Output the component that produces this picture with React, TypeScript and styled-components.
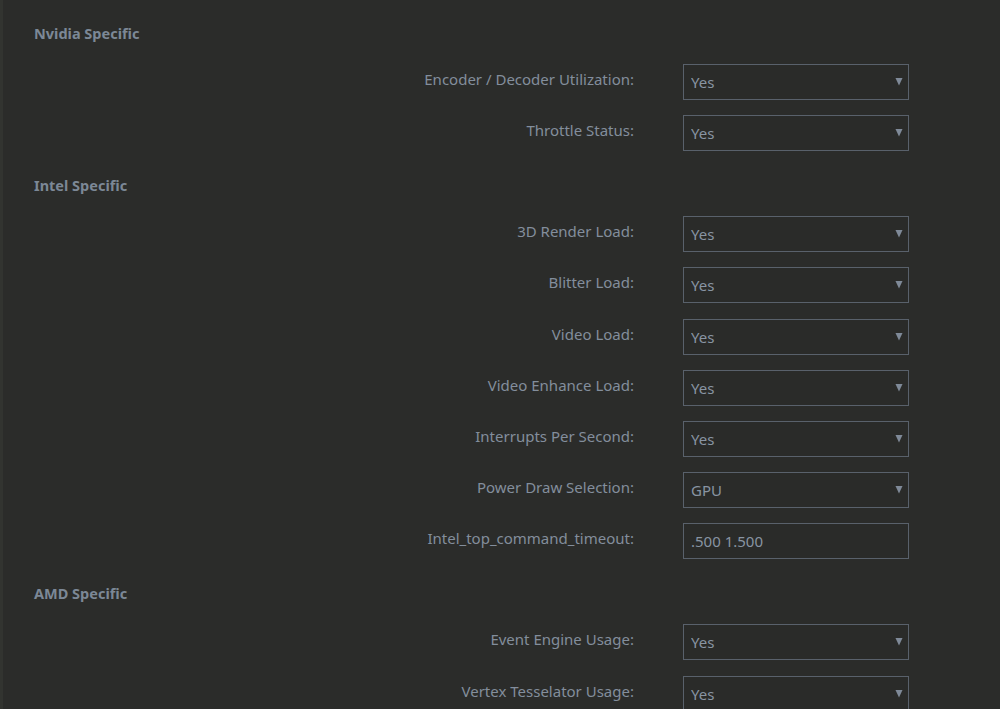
import React from "react";
import styled, { createGlobalStyle } from "styled-components";

type Field = {
  label: string;
  value: string;
  kind?: "select" | "text";
};

type Section = {
  title: string;
  fields: Field[];
};

const sections: Section[] = [
  {
    title: "Nvidia Specific",
    fields: [
      { label: "Encoder / Decoder Utilization:", value: "Yes" },
      { label: "Throttle Status:", value: "Yes" },
    ],
  },
  {
    title: "Intel Specific",
    fields: [
      { label: "3D Render Load:", value: "Yes" },
      { label: "Blitter Load:", value: "Yes" },
      { label: "Video Load:", value: "Yes" },
      { label: "Video Enhance Load:", value: "Yes" },
      { label: "Interrupts Per Second:", value: "Yes" },
      { label: "Power Draw Selection:", value: "GPU" },
      { label: "Intel_top_command_timeout:", value: ".500 1.500", kind: "text" },
    ],
  },
  {
    title: "AMD Specific",
    fields: [
      { label: "Event Engine Usage:", value: "Yes" },
      { label: "Vertex Tesselator Usage:", value: "Yes" },
    ],
  },
];

const GlobalStyle = createGlobalStyle`
  html, body {
    margin: 0;
    padding: 0;
    background: #2b2c2a;
    overflow: hidden;
  }
  * { box-sizing: border-box; }
`;

const Page = styled.div`
  width: 1000px;
  height: 709px;
  background: #2b2c2a;
  border-left: 3px solid #323430;
  padding: 23px 0 0 31px;
  font-family: "Noto Sans", "Open Sans", sans-serif;
  overflow: hidden;
`;

const Group = styled.section`
  display: flex;
  flex-direction: column;
  margin-bottom: 24px;
`;

const Heading = styled.h3`
  margin: 0 0 21px;
  font-size: 14.5px;
  line-height: 20px;
  font-weight: 700;
  color: #7c8896;
`;

const Rows = styled.div`
  display: flex;
  flex-direction: column;
  gap: 15.2px;
`;

const Row = styled.div`
  display: flex;
  align-items: flex-start;
  gap: 49px;
`;

const Label = styled.label`
  width: 600px;
  padding-top: 5px;
  text-align: right;
  font-size: 15px;
  line-height: 20px;
  color: #838e9c;
`;

const Control = styled.div`
  position: relative;
  width: 226px;
  height: 36px;
`;

const boxStyles = `
  width: 100%;
  height: 100%;
  margin: 0;
  padding: 0 24px 0 7px;
  border: 1px solid #59616b;
  border-radius: 0;
  background: #2a2b29;
  color: #8894a2;
  font-family: "Noto Sans", "Open Sans", sans-serif;
  font-size: 15px;
  outline: none;
`;

const Select = styled.select`
  ${boxStyles}
  appearance: none;
  -webkit-appearance: none;
`;

const TextInput = styled.input`
  ${boxStyles}
`;

const Caret = styled.svg`
  position: absolute;
  right: 6px;
  top: 13px;
  pointer-events: none;
`;

function FieldRow({ field }: { field: Field }) {
  return (
    <Row>
      <Label>{field.label}</Label>
      <Control>
        {field.kind === "text" ? (
          <TextInput readOnly value={field.value} />
        ) : (
          <>
            <Select defaultValue={field.value}>
              <option>{field.value}</option>
            </Select>
            <Caret width="8" height="9" viewBox="0 0 8 9">
              <path d="M0.5 1 L7.5 1 L4 8.5 Z" fill="#7f8a98" />
            </Caret>
          </>
        )}
      </Control>
    </Row>
  );
}

export default function App() {
  return (
    <>
      <GlobalStyle />
      <Page>
        {sections.map((s) => (
          <Group key={s.title}>
            <Heading>{s.title}</Heading>
            <Rows>
              {s.fields.map((f) => (
                <FieldRow key={f.label} field={f} />
              ))}
            </Rows>
          </Group>
        ))}
      </Page>
    </>
  );
}
